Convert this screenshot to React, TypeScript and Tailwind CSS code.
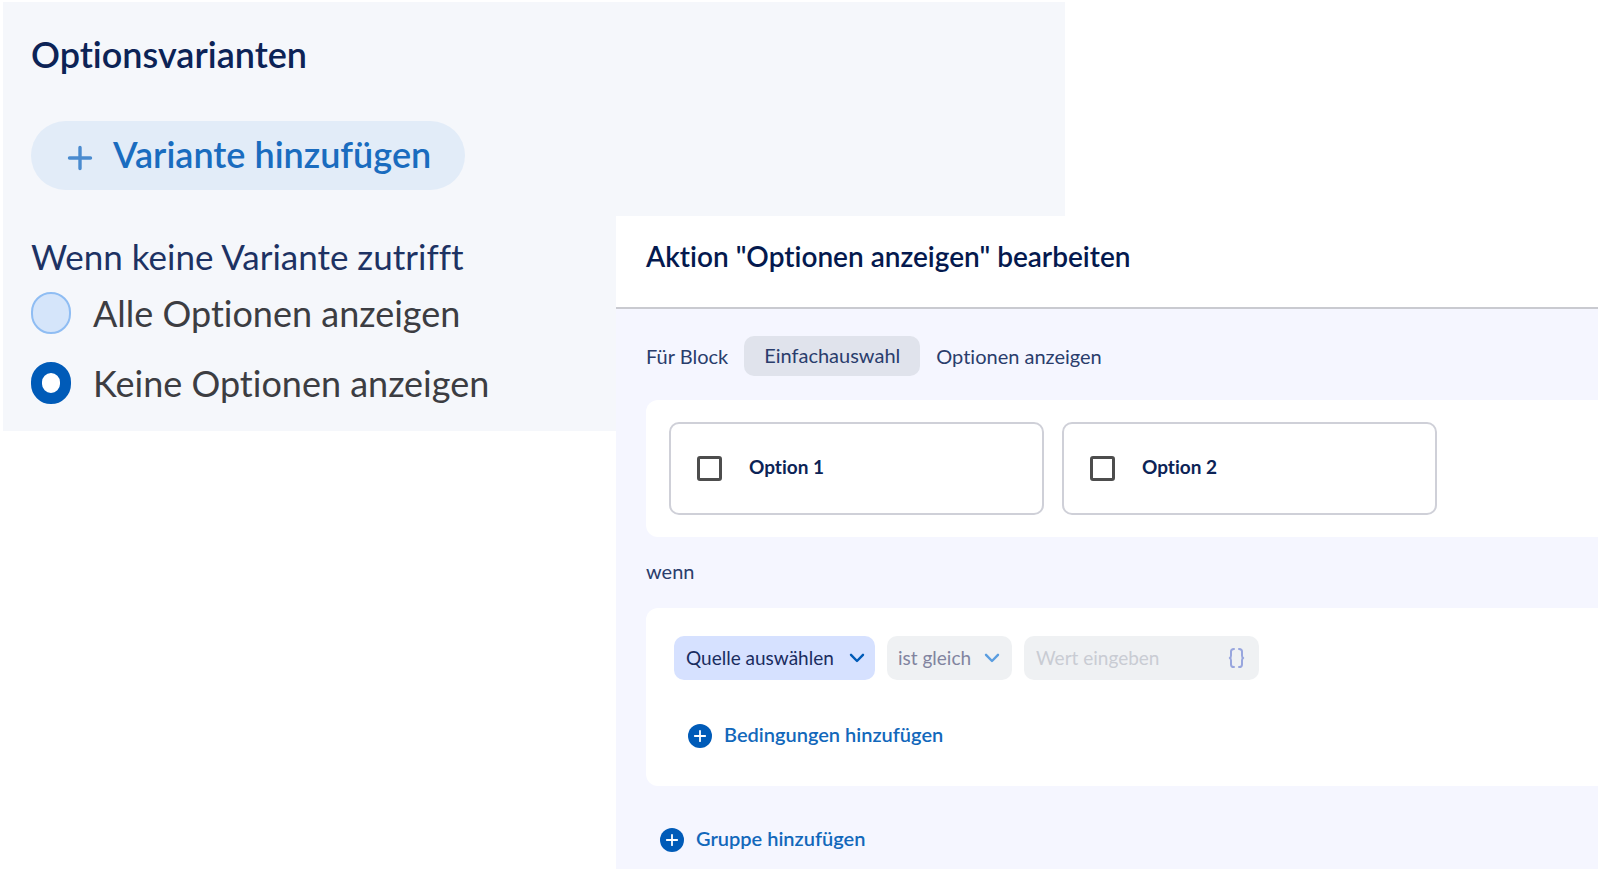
import { useState } from "react";

function Chevron({ className }: { className: string }) {
  return (
    <svg viewBox="0 0 16 10" className={`pointer-events-none col-start-1 row-start-1 h-[10px] w-4 self-center justify-self-end ${className}`} fill="none" stroke="currentColor" strokeWidth="2.4" strokeLinecap="round" strokeLinejoin="round" aria-hidden="true">
      <path d="M2 1.8 8 8l6-6.2" />
    </svg>
  );
}

function AddLink({ children }: { children: string }) {
  return (
    <button type="button" className="flex items-center gap-3 text-[20px] leading-5 font-semibold text-[#1268bb]">
      <svg viewBox="0 0 24 24" className="size-6" aria-hidden="true">
        <circle cx="12" cy="12" r="12" fill="#005bb8" />
        <path d="M12 6.8v10.400M6.800 12h10.400" stroke="#fff" strokeWidth="1.8" strokeLinecap="round" />
      </svg>
      <span className="pb-1">{children}</span>
    </button>
  );
}

function OptionCard({ label }: { label: string }) {
  return (
    <label className="flex h-[93px] w-[375px] items-center gap-[27px] rounded-[10px] border-2 border-[#cfd0d8] pl-[26px]">
      <input type="checkbox" className="size-[25px] appearance-none rounded-[3px] border-3 border-[#4d4d4d] bg-white checked:bg-[#005bb8]" />
      <span className="pb-1 text-[19px] leading-5 font-bold text-[#0c2356]">{label}</span>
    </label>
  );
}

const fallbacks = ["Alle Optionen anzeigen", "Keine Optionen anzeigen"];

export default function App() {
  const [fallback, setFallback] = useState(fallbacks[1]);

  return (
    <main className="grid min-h-screen grid-cols-[616fr_449fr_535fr] grid-rows-[216px_215px_auto] bg-white font-['Lato',sans-serif] [font-variant-ligatures:none]">
      <section className="col-span-2 col-start-1 row-span-2 row-start-1 mt-0.5 ml-[3px] bg-[#f5f7fb] pt-[30px] pl-7">
        <h2 className="text-[36px] leading-11 font-semibold text-[#0c2356]">Optionsvarianten</h2>
        <button type="button" className="mt-[45px] flex h-[69px] w-[434px] items-center rounded-full bg-[#e2ecf8] pb-1 pl-9 text-[36px] font-semibold text-[#1a6cbf]">
          <svg viewBox="0 0 26 26" className="mt-2 mr-5 size-[26px]" aria-hidden="true">
            <path d="M13 2.500v21M2.500 13h21" stroke="#4a8bcf" strokeWidth="3.4" strokeLinecap="round" />
          </svg>
          Variante hinzufügen
        </button>
        <fieldset className="mt-11">
          <legend className="text-[35px] leading-11 text-[#1d3263]">Wenn keine Variante zutrifft</legend>
          <div className="mt-[13px] flex flex-col gap-[26px]">
            {fallbacks.map((name) => (
              <label key={name} className="flex items-center gap-[22px] text-[36px] leading-11 text-[#3c3d42]">
                <input
                  type="radio"
                  name="fallback"
                  checked={fallback === name}
                  onChange={() => setFallback(name)}
                  className="h-[42px] w-10 appearance-none rounded-full border-2 border-[#8fbdf3] bg-[#d5e5fa] checked:border-11 checked:border-[#005bb8] checked:bg-white"
                />
                {name}
              </label>
            ))}
          </div>
        </fieldset>
      </section>

      <section className="col-span-2 col-start-2 row-span-2 row-start-2 mr-0.5 mb-0.5 flex flex-col bg-[#f5f6ff]">
        <header className="border-b-2 border-[#c9cad0] bg-white px-[30px] pt-5 pb-[31px]">
          <h1 className="text-[28px] leading-10 font-semibold text-[#04194e]">Aktion "Optionen anzeigen" bearbeiten</h1>
        </header>
        <div className="flex flex-col pt-[27px] pl-[30px]">
          <div className="flex items-center gap-4 text-[20px] leading-6 text-[#2a3d6c]">
            <span>Für Block</span>
            <span className="rounded-[10px] bg-[#e0e3ec] px-5 pt-[7px] pb-[9px]">Einfachauswahl</span>
            <span>Optionen anzeigen</span>
          </div>
          <div className="mt-6 flex gap-[18px] rounded-l-[12px] bg-white px-[23px] py-[22px]">
            <OptionCard label="Option 1" />
            <OptionCard label="Option 2" />
          </div>
          <p className="mt-[22px] mb-[25px] text-[20px] leading-6 text-[#2a3d6c]">wenn</p>
          <div className="rounded-l-[12px] bg-white px-7 pt-7 pb-[38px]">
            <div className="flex gap-3 text-[19px]">
              <div className="grid">
                <select aria-label="Quelle" className="col-start-1 row-start-1 h-11 w-[201px] appearance-none rounded-[10px] bg-[#d6e1ff] pr-8 pl-3 text-[#1a2c60]">
                  <option>Quelle auswählen</option>
                </select>
                <Chevron className="mr-[10px] text-[#005bb8]" />
              </div>
              <div className="grid">
                <select disabled aria-label="Vergleich" className="col-start-1 row-start-1 h-11 w-[125px] appearance-none rounded-[10px] bg-[#eff1f3] pr-8 pl-[11px] text-[#81849f] opacity-100">
                  <option>ist gleich</option>
                </select>
                <Chevron className="mr-3 text-[#5b9ee0]" />
              </div>
              <div className="flex h-11 w-[235px] items-center justify-between rounded-[10px] bg-[#eff1f3] pr-[14px] pl-3">
                <input disabled aria-label="Wert" placeholder="Wert eingeben" className="w-40 bg-transparent placeholder:text-[#c9ccd3]" />
                <svg viewBox="0 0 17 20" className="h-5 w-[17px]" fill="none" stroke="#98a6de" strokeWidth="2" strokeLinecap="round" strokeLinejoin="round" aria-hidden="true">
                  <path d="M6 1C4 1 3 1.600 3 3.600V7.500c0 1.400-.3 2.200-1.200 2.500.9.3 1.200 1.100 1.200 2.500v3.900c0 2 1 2.600 3 2.600M11 1c2 0 3 .6 3 2.600v3.900c0 1.400.3 2.200 1.200 2.500-.9.3-1.200 1.100-1.200 2.500v3.900c0 2-1 2.600-3 2.600" />
                </svg>
              </div>
            </div>
            <div className="mt-11 pl-[14px]">
              <AddLink>Bedingungen hinzufügen</AddLink>
            </div>
          </div>
          <div className="mt-[42px] pb-4 pl-[14px]">
            <AddLink>Gruppe hinzufügen</AddLink>
          </div>
        </div>
      </section>
    </main>
  );
}
